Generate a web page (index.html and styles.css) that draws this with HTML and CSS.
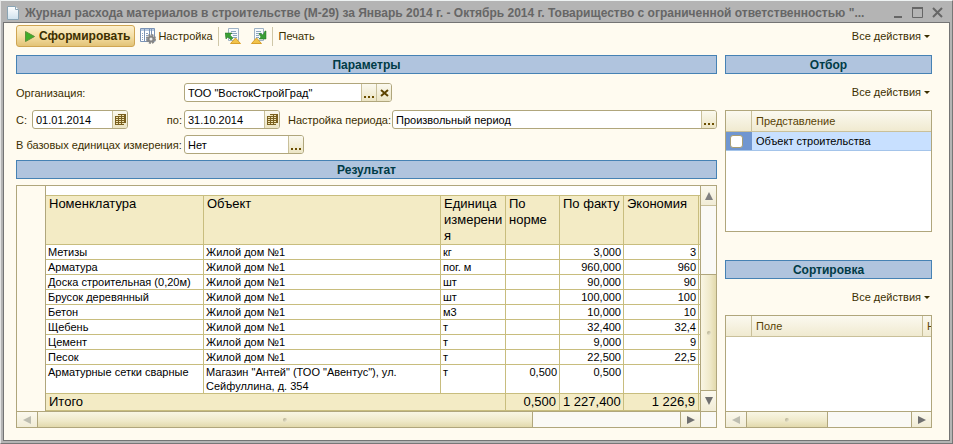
FILE: index.html
```html
<!DOCTYPE html>
<html lang="ru">
<head>
  <meta charset="UTF-8">
  <meta name="viewport" content="width=device-width, initial-scale=1.0">
  <title>Журнал расхода материалов в строительстве (М-29)</title>
  <link rel="stylesheet" href="styles.css">
</head>
<body>
  <div class="window">
    <header class="titlebar">
      <svg class="doc-icon" width="12" height="14" viewBox="0 0 12 14">
        <defs><linearGradient id="paper" x1="0" y1="0" x2="0" y2="1"><stop offset="0" stop-color="#fff"/><stop offset="1" stop-color="#cfe2ee"/></linearGradient></defs>
        <path d="M.5.5h8l3 3v10H.5z" fill="url(#paper)" stroke="#8aa5b5"/>
        <path d="M8.5.5v3h3" fill="#fff" stroke="#8aa5b5"/>
      </svg>
      <h1>Журнал расхода материалов в строительстве (М-29) за Январь 2014 г. - Октябрь 2014 г. Товарищество с ограниченной ответственностью "...</h1>
      <div class="window-buttons">
        <button aria-label="Свернуть"><svg width="11" height="11" viewBox="0 0 11 11"><path d="M2 9h8v2H2z" fill="#666"/></svg></button>
        <button aria-label="Развернуть"><svg width="11" height="11" viewBox="0 0 11 11"><path d="M.5 1.5h10v9H.5z" fill="none" stroke="#666"/><path d="M0 0h11v2H0z" fill="#666"/></svg></button>
        <button aria-label="Закрыть"><svg width="11" height="11" viewBox="0 0 11 11"><path d="M1 1l9 9M10 1l-9 9" stroke="#666" stroke-width="2"/></svg></button>
      </div>
    </header>

    <div class="content">
      <div class="toolbar">
        <button class="primary">
          <svg width="10" height="11" viewBox="0 0 10 11"><path d="M.5.5v10l9-5z" fill="#3fae2a" stroke="#5c8f3c"/></svg>
          Сформировать
        </button>
        <button class="tool">
          <svg width="16" height="16" viewBox="0 0 16 16">
            <path d="M.5.5h14v13H.5z" fill="#fff" stroke="#7b93b5"/>
            <path d="M1 1h13v2H1z" fill="#b9cbe2"/>
            <path d="M4.5 1v12M9.5 1v12M11.5 1v6" stroke="#7b93b5"/>
            <path d="M2 5.5h1M2 7.5h1M2 9.5h1M6 5.5h2M6 7.5h2M6 9.5h2M6 11.5h2M2 11.5h1" stroke="#8ba0bd"/>
            <circle cx="11" cy="11" r="4" fill="none" stroke="#888" stroke-width="2" stroke-dasharray="2 1.14"/>
            <circle cx="11" cy="11" r="2.5" fill="#eee" stroke="#858585" stroke-width="2"/>
          </svg>
          Настройка
        </button>
        <span class="separator"></span>
        <button class="tool" aria-label="Загрузить настройки">
          <svg width="16" height="16" viewBox="0 0 16 16">
            <path d="M3.5.5h10v12h-10z" fill="#f7fafc" stroke="#9fb2c4"/>
            <path d="M6 3.5h5M6 5.5h6M8 7.5h4M8 9.5h4" stroke="#8da6be"/>
            <path d="M0 5h7L5 7l3 3-2 2-3-3-2 2z" fill="#3a9e35" stroke="#247124" stroke-width=".5"/>
            <path d="M5.5 15.5l5-5.5 5 5.5z" fill="#f1c34a" stroke="#d9a02c"/>
          </svg>
        </button>
        <button class="tool" aria-label="Сохранить настройки">
          <svg width="16" height="16" viewBox="0 0 16 16">
            <path d="M3.5.5h9v12h-9z" fill="#f7fafc" stroke="#9fb2c4"/>
            <path d="M5 3.5h5M5 5.5h6M5 7.5h3M5 9.5h3" stroke="#8da6be"/>
            <path d="M15 11H8l2-2-2-3 1-1 3 2 2-4h1z" fill="#3a9e35" stroke="#247124" stroke-width=".5"/>
            <path d="M.5 15.5l5-5.5 5 5.5z" fill="#f1c34a" stroke="#d9a02c"/>
          </svg>
        </button>
        <span class="separator"></span>
        <button class="tool">Печать</button>
        <button class="actions">Все действия</button>
      </div>

      <div class="columns">
        <main class="main">
          <h2 class="section">Параметры</h2>
          <form class="params">
            <div class="row">
              <div class="lead"><label for="org">Организация:</label></div>
              <div class="field org">
                <input id="org" type="text" value='ТОО "ВостокСтройГрад"'>
                <button type="button" class="dots" aria-label="Выбрать"></button>
                <button type="button" aria-label="Очистить"><svg width="9" height="8" viewBox="0 0 9 8"><path d="M1 1l7 6M8 1L1 7" stroke="#5c4300" stroke-width="2"/></svg></button>
              </div>
            </div>
            <div class="row">
              <div class="lead">
                <label for="from">С:</label>
                <div class="field date">
                  <input id="from" type="text" value="01.01.2014">
                  <button type="button" aria-label="Календарь"><svg width="11" height="11" viewBox="0 0 11 11" shape-rendering="crispEdges"><path d="M3 0h8v9H9v2H0V2h3z" fill="#7a6020"/><path d="M3 1.5h7M1 3.5h8M1 5.5h8M1 7.5h8M1 9.5h8" stroke="#efe4b4"/><path d="M3.5 2v9M6.5 0v11M9.5 0v9" stroke="#7a6020"/></svg></button>
                </div>
                <label for="to">по:</label>
              </div>
              <div class="field date">
                <input id="to" type="text" value="31.10.2014">
                <button type="button" aria-label="Календарь"><svg width="11" height="11" viewBox="0 0 11 11" shape-rendering="crispEdges"><path d="M3 0h8v9H9v2H0V2h3z" fill="#7a6020"/><path d="M3 1.5h7M1 3.5h8M1 5.5h8M1 7.5h8M1 9.5h8" stroke="#efe4b4"/><path d="M3.5 2v9M6.5 0v11M9.5 0v9" stroke="#7a6020"/></svg></button>
              </div>
              <label class="period-label" for="period">Настройка периода:</label>
              <div class="field wide">
                <input id="period" type="text" value="Произвольный период">
                <button type="button" class="dots" aria-label="Выбрать"></button>
              </div>
            </div>
            <div class="row">
              <div class="lead"><label for="base">В базовых единицах измерения:</label></div>
              <div class="field base">
                <input id="base" type="text" value="Нет">
                <button type="button" class="dots" aria-label="Выбрать"></button>
              </div>
            </div>
          </form>

          <h2 class="section">Результат</h2>
          <div class="result">
            <div class="sheet">
              <div class="gutter"></div>
              <div class="sheet-body">
                <table class="report">
                  <colgroup>
                    <col class="c-name"><col><col class="c-unit"><col class="c-norm"><col class="c-fact"><col class="c-econ"><col class="c-rest">
                  </colgroup>
                  <thead>
                    <tr><th>Номенклатура</th><th>Объект</th><th>Единица измерения</th><th>По норме</th><th>По факту</th><th>Экономия</th><th></th></tr>
                  </thead>
                  <tbody>
                    <tr><td>Метизы</td><td>Жилой дом №1</td><td>кг</td><td></td><td>3,000</td><td>3</td><td></td></tr>
                    <tr><td>Арматура</td><td>Жилой дом №1</td><td>пог. м</td><td></td><td>960,000</td><td>960</td><td></td></tr>
                    <tr><td>Доска строительная (0,20м)</td><td>Жилой дом №1</td><td>шт</td><td></td><td>90,000</td><td>90</td><td></td></tr>
                    <tr><td>Брусок деревянный</td><td>Жилой дом №1</td><td>шт</td><td></td><td>100,000</td><td>100</td><td></td></tr>
                    <tr><td>Бетон</td><td>Жилой дом №1</td><td>м3</td><td></td><td>10,000</td><td>10</td><td></td></tr>
                    <tr><td>Щебень</td><td>Жилой дом №1</td><td>т</td><td></td><td>32,400</td><td>32,4</td><td></td></tr>
                    <tr><td>Цемент</td><td>Жилой дом №1</td><td>т</td><td></td><td>9,000</td><td>9</td><td></td></tr>
                    <tr><td>Песок</td><td>Жилой дом №1</td><td>т</td><td></td><td>22,500</td><td>22,5</td><td></td></tr>
                    <tr><td>Арматурные сетки сварные</td><td>Магазин "Антей" (ТОО "Авентус"), ул. Сейфуллина, д. 354</td><td>т</td><td>0,500</td><td>0,500</td><td></td><td></td></tr>
                  </tbody>
                  <tfoot>
                    <tr><td colspan="3">Итого</td><td>0,500</td><td>1 227,400</td><td>1 226,9</td><td></td></tr>
                  </tfoot>
                </table>
              </div>
              <div class="vscroll">
                <button class="arrow" aria-label="Вверх"><svg width="8" height="8" viewBox="0 0 8 8"><path d="M4 0l4 8H0z" fill="#808080"/></svg></button>
                <div class="track"></div>
                <div class="thumb"><i></i></div>
                <button class="arrow" aria-label="Вниз"><svg width="8" height="8" viewBox="0 0 8 8"><path d="M0 0h8L4 8z" fill="#707070"/></svg></button>
              </div>
            </div>
            <div class="hscroll with-corner">
              <button class="arrow" aria-label="Влево"><svg width="8" height="8" viewBox="0 0 8 8"><path d="M8 0v8L0 4z" fill="#bdbdb0"/></svg></button>
              <div class="thumb"><i></i></div>
              <div class="track"></div>
              <button class="arrow" aria-label="Вправо"><svg width="8" height="8" viewBox="0 0 8 8"><path d="M0 0v8l8-4z" fill="#707070"/></svg></button>
              <div class="corner"></div>
            </div>
          </div>
        </main>

        <aside class="side">
          <section class="panel filter">
            <h2 class="section">Отбор</h2>
            <button class="actions">Все действия</button>
            <div class="listbox">
              <table class="list">
                <colgroup><col class="c-mark"><col></colgroup>
                <thead><tr><th></th><th>Представление</th></tr></thead>
                <tbody><tr class="selected"><td><input type="checkbox" id="f1"></td><td><label for="f1">Объект строительства</label></td></tr></tbody>
              </table>
            </div>
          </section>
          <section class="panel sort">
            <h2 class="section">Сортировка</h2>
            <button class="actions">Все действия</button>
            <div class="listbox">
              <table class="list">
                <colgroup><col class="c-mark"><col><col class="c-dir"></colgroup>
                <thead><tr><th></th><th>Поле</th><th>Н</th></tr></thead>
              </table>
              <div class="hscroll">
                <button class="arrow" aria-label="Влево"><svg width="8" height="8" viewBox="0 0 8 8"><path d="M8 0v8L0 4z" fill="#bdbdb0"/></svg></button>
                <div class="thumb"><i></i></div>
                <div class="track"></div>
                <button class="arrow" aria-label="Вправо"><svg width="8" height="8" viewBox="0 0 8 8"><path d="M0 0v8l8-4z" fill="#707070"/></svg></button>
              </div>
            </div>
          </section>
        </aside>
      </div>
    </div>
  </div>
</body>
</html>
```

FILE: styles.css
```css
* {
  box-sizing: border-box;
}
body {
  margin: 0;
  background: #f0f0f0;
  font-family: "Liberation Sans", Arial, sans-serif;
  font-size: 11px;
  color: #3c2f00;
}
button, input {
  font: inherit;
  color: inherit;
  margin: 0;
}
button {
  display: flex;
  align-items: center;
  justify-content: center;
  padding: 0;
  border: 0;
  background: none;
}
svg {
  display: block;
  flex: none;
}
.window {
  display: flex;
  flex-direction: column;
  min-height: 100vh;
  padding: 0 2px 2px;
  background: #b4b4b4;
  border: 1px solid #777;
  border-top-color: #eef2f2;
  border-left-color: #e4e4e4;
}
.titlebar {
  display: flex;
  align-items: center;
  height: 21px;
  padding: 2px 7px 0 4px;
  color: #666;
}
.titlebar h1 {
  flex: 1;
  min-width: 0;
  margin: 0 0 0 6px;
  font-size: 12px;
  line-height: 16px;
  white-space: nowrap;
  overflow: hidden;
}
.window-buttons {
  display: flex;
  gap: 9px;
}
.content {
  flex: 1;
  display: flex;
  flex-direction: column;
  padding: 2px 17px 12px 12px;
  background: #fffbf0;
  border: 1px solid #747474;
}

/* toolbar */
.toolbar {
  display: flex;
  align-items: center;
  height: 22px;
  margin-bottom: 8px;
}
.primary {
  height: 22px;
  padding: 0 4px 0 8px;
  gap: 4px;
  font-size: 12px;
  font-weight: bold;
  border: 1px solid #cfa552;
  border-radius: 3px;
  background: linear-gradient(#fdf0cd, #f4dfa6 50%, #e3c377);
}
.tool {
  height: 20px;
  margin-left: 5px;
  gap: 2px;
}
.separator {
  width: 1px;
  height: 19px;
  margin-left: 5px;
  background: #cfc7a8;
}
.separator + .tool {
  margin-left: 6px;
}
.tool + .tool {
  margin-left: 10px;
}
.actions {
  gap: 3px;
  margin-left: auto;
  padding-right: 2px;
}
.actions::after {
  content: "";
  border: 3px solid transparent;
  border-top-color: #3c2f00;
  border-bottom: 0;
}

/* layout */
.columns {
  flex: 1;
  display: grid;
  grid-template-columns: minmax(0, 1fr) 207px;
  gap: 8px;
}
.main, .side, .panel {
  display: flex;
  flex-direction: column;
}
.section {
  height: 19px;
  margin: 0;
  border: 1px solid #4682b4;
  background: #b0c4de;
  color: #003b46;
  font-size: 12px;
  line-height: 18px;
  text-align: center;
}

/* parameters */
.params {
  display: flex;
  flex-direction: column;
  gap: 6px;
  padding: 9px 0 6px;
}
.row {
  display: flex;
  align-items: center;
}
.row:first-child {
  margin-bottom: 2px;
}
.lead {
  flex: none;
  display: flex;
  align-items: center;
  justify-content: space-between;
  width: 168px;
  padding-right: 2px;
  white-space: nowrap;
}
.field {
  display: flex;
  height: 19px;
  border: 1px solid #b0a67c;
  border-radius: 3px;
  background: #fff;
  overflow: hidden;
}
.field input {
  flex: 1;
  min-width: 0;
  padding: 0 3px;
  border: 0;
  outline: 0;
  background: none;
  color: #000;
}
.field button {
  width: 15px;
  border-left: 1px solid #c9c09a;
  background: linear-gradient(#fbf9ee, #ece5c5);
}
.dots::after {
  content: "";
  width: 10px;
  height: 2px;
  margin-top: 9px;
  background: repeating-linear-gradient(90deg, #6b4e00 0 2px, transparent 2px 4px);
}
.org { width: 208px; }
.date { width: 96px; }
.base { width: 120px; }
.wide { flex: 1; }
.lead .date {
  margin-right: auto;
  margin-left: 5px;
}
.period-label {
  width: 112px;
  padding-left: 8px;
  white-space: nowrap;
}

/* report */
.result {
  flex: 1;
  display: flex;
  flex-direction: column;
  margin-top: 6px;
  border: 1px solid #b0a67c;
}
.sheet {
  flex: 1;
  display: flex;
  background: #fff;
}
.gutter {
  width: 29px;
  background: #fffbf0;
  border-right: 1px solid #b0a67c;
}
.sheet-body {
  flex: 1;
  min-width: 0;
  padding-top: 9px;
}
.report, .list {
  width: 100%;
  table-layout: fixed;
  border-collapse: separate;
  border-spacing: 0;
}
.report {
  color: #000;
  border-top: 1px solid #c8bd7e;
}
.c-name { width: 158px; }
.c-unit { width: 65px; }
.c-norm { width: 54px; }
.c-fact { width: 64px; }
.c-econ { width: 75px; }
.c-rest { width: 1px; }
.report th, .report td {
  padding: 0 2px;
  border-right: 1px solid #c8bd7e;
  border-bottom: 1px solid #c8bd7e;
  line-height: 14px;
  text-align: left;
  vertical-align: top;
}
.report th:last-child, .report td:last-child {
  padding: 0;
  border-right: 0;
}
.report th {
  height: 49px;
  padding: 0 0 0 3px;
  background: #f3ebc5;
  font-size: 13px;
  font-weight: normal;
  line-height: 16px;
  overflow-wrap: anywhere;
}
.report tbody td:nth-child(n+4), .report tfoot td:nth-child(n+2) {
  text-align: right;
}
.report tfoot td {
  padding: 0 3px;
  background: #f3ebc5;
  font-size: 13px;
  line-height: 16px;
  white-space: nowrap;
}
.report tfoot td:last-child {
  padding: 0;
}

/* scrollbars */
.vscroll {
  display: flex;
  flex-direction: column;
  width: 16px;
  border-left: 1px solid #b0a67c;
}
.hscroll {
  display: flex;
  height: 16px;
  border-top: 1px solid #b0a67c;
}
.arrow {
  flex: none;
  background: linear-gradient(#fbf9ee, #f1ecd6);
}
.vscroll .arrow {
  height: 20px;
}
.hscroll .arrow {
  width: 20px;
}
.track {
  flex: 1;
  background: #faf9f5;
}
.thumb {
  display: flex;
  align-items: center;
  justify-content: center;
  background: linear-gradient(#f9f6e4, #efe9c9 60%, #e2d9ac);
}
.thumb i {
  width: 4px;
  height: 4px;
  border-radius: 2px;
  background: linear-gradient(135deg, #aaa484, #f6f2dc);
}
.vscroll .thumb {
  flex: 0 0 52%;
  border: solid #b0a67c;
  border-width: 1px 0;
  background: linear-gradient(90deg, #f9f6e4, #efe9c9 60%, #e2d9ac);
}
.vscroll .arrow:first-child {
  border-bottom: 1px solid #c9c09a;
}
.hscroll .thumb {
  border: solid #b0a67c;
  border-width: 0 1px;
  flex: 0 0 40%;
}
.with-corner .thumb {
  flex-basis: 71%;
}
.hscroll .arrow:last-of-type {
  border-left: 1px solid #b0a67c;
}
.corner {
  width: 16px;
  border-left: 1px solid #b0a67c;
  background: #faf9f5;
}

/* side lists */
.side {
  justify-content: space-between;
}
.panel .actions {
  height: 36px;
}
.listbox {
  display: flex;
  flex-direction: column;
  justify-content: space-between;
  border: 1px solid #b0a67c;
  background: #fff;
}
.filter .listbox {
  height: 122px;
}
.sort .listbox {
  height: 113px;
}
.c-mark { width: 26px; }
.c-dir { width: 8px; }
.list th {
  height: 21px;
  padding: 0 4px;
  border-right: 1px solid #c9c09a;
  border-bottom: 1px solid #c9c09a;
  background: linear-gradient(#fbf9f0, #f0ead0);
  color: #594304;
  font-weight: normal;
  text-align: left;
  overflow: hidden;
}
.list th:last-child {
  border-right: 0;
}
.list td {
  height: 19px;
  padding: 0 4px;
  border-bottom: 1px solid #a4c4ea;
  background: #c8e0ff;
  color: #000;
}
.list td:first-child {
  background: #7096d0;
}
.list input {
  display: block;
  appearance: none;
  width: 13px;
  height: 13px;
  margin: 0;
  border: 1px solid #a89e74;
  border-radius: 3px;
  background: #fff;
}
```
